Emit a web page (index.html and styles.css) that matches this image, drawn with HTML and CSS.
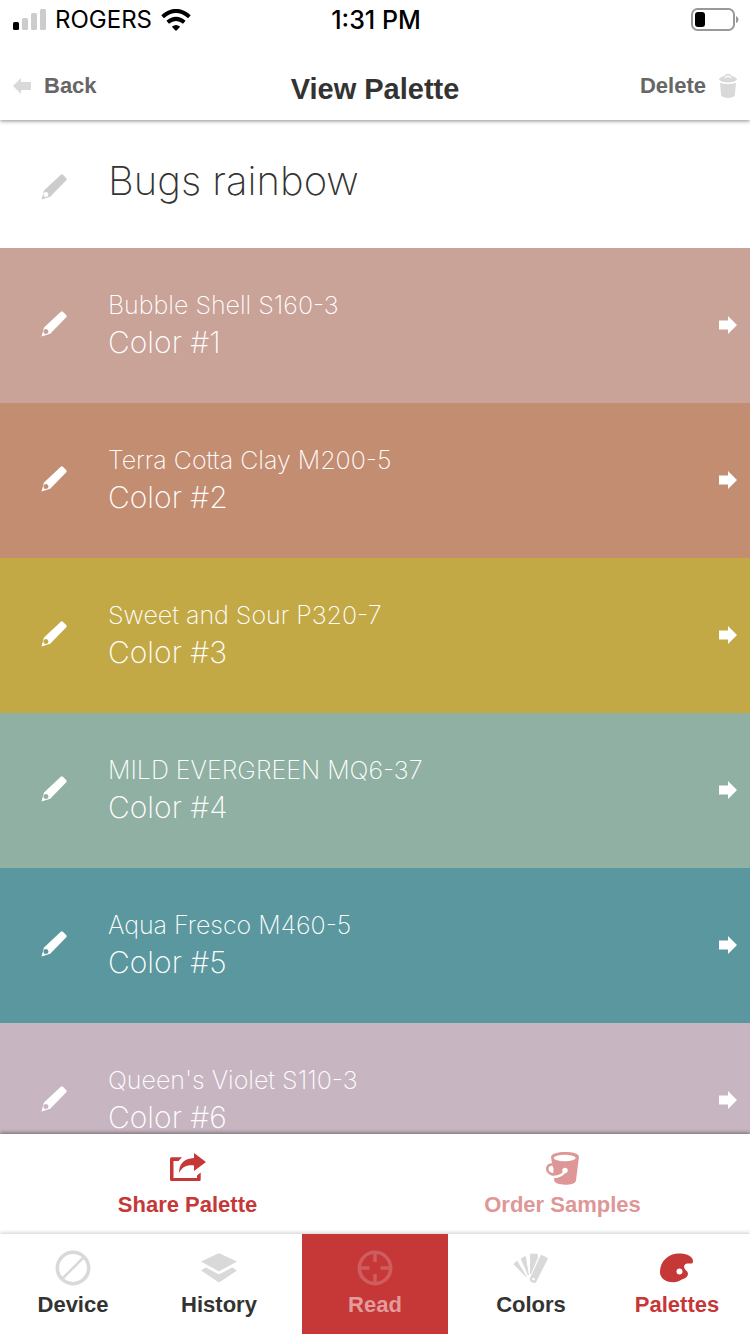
FILE: index.html
```html
<!DOCTYPE html>
<html lang="en">
<head>
<meta charset="utf-8">
<meta name="viewport" content="width=device-width, initial-scale=1">
<title>View Palette</title>
<link rel="stylesheet" href="styles.css">
</head>
<body>
<svg class="defs" aria-hidden="true">
  <symbol id="pencil" viewBox="0 0 26 26">
    <path fill="currentColor" fill-rule="evenodd" d="M19.800.7q1.200-.8 2.300.2l3 3q1 1.100.2 2.300L9.200 22.800.5 25.500 3 16.500zM5 18a2.500 2.500 0 100 5 2.500 2.500 0 000-5z"/>
  </symbol>
  <symbol id="arrow" viewBox="0 0 18 18">
    <path fill="currentColor" d="M0 4.500h9V0l9 9-9 9v-4.500H0z"/>
  </symbol>
</svg>
<div class="app">
  <div class="status">
    <div class="carrier">
      <svg width="33" height="22" viewBox="0 0 33 22"><rect y="13" width="6" height="8" rx="1.500"/><g fill="#ccc"><rect x="9" y="9" width="6" height="12" rx="1.500"/><rect x="18" y="4" width="6" height="17" rx="1.500"/><rect x="27" y="0" width="6" height="21" rx="1.500"/></g></svg>
      <span>ROGERS</span>
      <svg width="30" height="22" viewBox="0 0 30 22"><path d="M15 22l-4.200-4.300q4.200-3.400 8.400 0z"/><g fill="none" stroke="#000" stroke-width="4"><path d="M6.700 13.300q8.300-6.900 16.600 0"/><path d="M1.600 7.700q13.400-11.600 26.800 0"/></g></svg>
    </div>
    <div class="clock">1:31 PM</div>
    <svg class="battery" width="48" height="24" viewBox="0 0 48 24"><rect x="1" y="1" width="42" height="21" rx="5.500" fill="none" stroke="#999" stroke-width="2"/><rect x="4" y="4" width="10" height="15" rx="3"/><path fill="#999" d="M45 8q2.500 1 2.500 3.500T45 15z"/></svg>
  </div>
  <header class="bar">
    <button class="nav"><svg width="18" height="16" viewBox="0 0 18 16"><path fill="#d9d9d9" d="M18 4H8V0L0 8l8 8v-4h10z"/></svg>Back</button>
    <h1 class="title">View Palette</h1>
    <button class="nav nav-end">Delete<svg width="18" height="24" viewBox="0 0 18 24"><path fill="#d9d9d9" fill-rule="evenodd" d="M0 5.500C.5 3.500 3 2.200 5.300 1.900 6.500.1 7.700 0 9 0s2.500.1 3.700 1.900C15 2.200 17.500 3.500 18 5.500 16.500 7.500 13 8.500 9 8.500S1.500 7.500 0 5.500zm5.600-1.100c1 .2 1.200-.2 1.600-.8.800-1 2.800-1 3.600 0 .4.600.6 1 1.600.8C12 2.500 10.800 1.600 9 1.600S6 2.500 5.600 4.400z"/><path fill="#d9d9d9" d="M1 8.600c4 2 12 2 16 0l-1.200 12.900c-1.500 3.300-12.100 3.300-13.600 0z"/></svg></button>
  </header>
  <main class="list">
    <section class="row name-row">
      <button class="edit muted" aria-label="Rename palette"><svg width="26" height="26"><use href="#pencil"/></svg></button>
      <h2 class="palette-name">Bugs rainbow</h2>
    </section>
    <section class="row shell">
      <button class="edit" aria-label="Edit color 1"><svg width="26" height="26"><use href="#pencil"/></svg></button>
      <div class="text"><p class="paint">Bubble Shell S160-3</p><p class="label">Color #1</p></div>
      <button class="open" aria-label="Open color 1"><svg width="18" height="18"><use href="#arrow"/></svg></button>
    </section>
    <section class="row clay">
      <button class="edit" aria-label="Edit color 2"><svg width="26" height="26"><use href="#pencil"/></svg></button>
      <div class="text"><p class="paint">Terra Cotta Clay M200-5</p><p class="label">Color #2</p></div>
      <button class="open" aria-label="Open color 2"><svg width="18" height="18"><use href="#arrow"/></svg></button>
    </section>
    <section class="row sour">
      <button class="edit" aria-label="Edit color 3"><svg width="26" height="26"><use href="#pencil"/></svg></button>
      <div class="text"><p class="paint">Sweet and Sour P320-7</p><p class="label">Color #3</p></div>
      <button class="open" aria-label="Open color 3"><svg width="18" height="18"><use href="#arrow"/></svg></button>
    </section>
    <section class="row evergreen">
      <button class="edit" aria-label="Edit color 4"><svg width="26" height="26"><use href="#pencil"/></svg></button>
      <div class="text"><p class="paint">MILD EVERGREEN MQ6-37</p><p class="label">Color #4</p></div>
      <button class="open" aria-label="Open color 4"><svg width="18" height="18"><use href="#arrow"/></svg></button>
    </section>
    <section class="row aqua">
      <button class="edit" aria-label="Edit color 5"><svg width="26" height="26"><use href="#pencil"/></svg></button>
      <div class="text"><p class="paint">Aqua Fresco M460-5</p><p class="label">Color #5</p></div>
      <button class="open" aria-label="Open color 5"><svg width="18" height="18"><use href="#arrow"/></svg></button>
    </section>
    <section class="row violet">
      <button class="edit" aria-label="Edit color 6"><svg width="26" height="26"><use href="#pencil"/></svg></button>
      <div class="text"><p class="paint">Queen's Violet S110-3</p><p class="label">Color #6</p></div>
      <button class="open" aria-label="Open color 6"><svg width="18" height="18"><use href="#arrow"/></svg></button>
    </section>
  </main>
  <div class="actions">
    <button class="item red"><svg width="36" height="36" viewBox="0 0 36 36"><path fill="currentColor" d="M12 7.300H1.500Q0 7.300 0 9v20.500Q0 31 1.500 31h28q1.200 0 1.200-1.500v-7L27 25.500V28H3.500V11h5z"/><path fill="currentColor" d="M24 3l12 9-12 9v-5.500c-7-.8-11.500 1-15 7.500C9 13.500 14 8.500 24 8z"/></svg>Share Palette</button>
    <button class="item faded"><svg width="36" height="36" viewBox="0 0 36 36"><path fill="currentColor" d="M6 6.500C7 3.500 13 2 20 2s13.500 1.300 14 4.500l-3 24c-.6 3-5 4.200-11 4.200S9.500 33 9.300 30.500z"/><ellipse cx="19.700" cy="8" rx="11" ry="3.200" fill="#fff"/><ellipse cx="6" cy="19.700" rx="2.500" ry="4" fill="#fff"/><path fill="none" stroke="currentColor" stroke-width="2.500" d="M7.500 14.500C3.500 14 1.500 17 2.500 20.500S8 25 12 24"/><path fill="none" stroke="#fff" stroke-width="2.600" d="M8.500 27C14 26.800 18 25 20 21"/><circle cx="20" cy="20.500" r="2.700" fill="#fff"/></svg>Order Samples</button>
  </div>
  <nav class="tabs">
    <button class="item tab"><svg class="gray" width="36" height="36" viewBox="0 0 36 36"><g fill="none" stroke="currentColor"><circle cx="18" cy="18" r="15.700" stroke-width="3.500"/><path stroke-width="2.500" d="M7.500 28.500l21-21"/></g></svg>Device</button>
    <button class="item tab"><svg class="gray" width="36" height="36" viewBox="0 0 36 36"><path fill="currentColor" d="M17.200 3.600q.8-.4 1.600 0L36 11.500 18.800 21q-.8.400-1.600 0L0 11.500zM4.800 17.500L17.200 24q.8.400 1.600 0l12.400-6.500L36 20.500 18.800 32q-.8.500-1.600 0L0 20.500z"/></svg>History</button>
    <button class="item tab read"><svg width="36" height="36" viewBox="0 0 36 36"><g fill="none" stroke="#d05d5d"><circle cx="18" cy="18" r="15.700" stroke-width="3.500"/><path stroke-width="3.500" d="M18 2v10M18 24v10M2 18h10.500M23.500 18H34"/></g></svg>Read</button>
    <button class="item tab"><svg class="gray" width="36" height="36" viewBox="0 0 36 36"><g fill="currentColor" stroke="currentColor" stroke-linejoin="round"><path d="M.8 14L4 11.200 13 26.500z"/><path d="M8.200 8.800L12.300 6.500 15.400 25z"/><path d="M17.500 4.200h6.800V8L17.500 24z"/><path fill-rule="evenodd" stroke-width="2" d="M28.500 6l5.200 2.700L22 32l-4.500-2.500zM20.300 26.800a2.500 2.500 0 100 5 2.500 2.500 0 000-5z"/></g></svg>Colors</button>
    <button class="item tab red"><svg width="36" height="36" viewBox="0 0 36 36"><path fill="currentColor" fill-rule="evenodd" d="M1 22C1 11 9.500 3.500 20 3.500c6 0 11.500 1.500 13.500 5.500.8 2.500.5 4-.5 4.500-2.500.5-5-1-7 1-2.500 3.500.5 5 2.500 7.500 1.500 3.500-1 6-4.500 7-3 1-4.500 3-9 3.300C6 32.500 1 28 1 22zM20.500 18.500a3 3 0 100 6 3 3 0 000-6z"/></svg>Palettes</button>
  </nav>
</div>
</body>
</html>
```

FILE: styles.css
```css
* { box-sizing: border-box; }
body { margin: 0; background: #fff; color: #333332; font-family: "Liberation Sans", Arial, sans-serif; }
h1, h2, p { margin: 0; }
button { margin: 0; padding: 0; border: 0; background: none; color: inherit; font: inherit; cursor: pointer; }
svg { display: block; flex: none; }
.defs { display: none; }

.app { display: flex; flex-direction: column; height: 100vh; overflow: hidden; }

.status { position: relative; z-index: 2; display: grid; grid-template-columns: 1fr auto 1fr; align-items: center; height: 40px; padding: 0 11px 0 13px; background: #fff; font: 500 24px/40px Inter, sans-serif; color: #000; }
.carrier { display: flex; align-items: center; gap: 9px; font-weight: 400; }
.clock { font-size: 25px; }
.battery { justify-self: end; }

.bar { position: relative; z-index: 1; display: grid; grid-template-columns: 1fr auto 1fr; align-items: center; height: 80px; padding: 12px 13px 0; background: #fff; box-shadow: 0 1px 4px rgba(0, 0, 0, .45); }
.nav { display: flex; align-items: center; gap: 13px; height: 68px; color: #666; font-size: 22px; font-weight: 700; }
.nav-end { justify-self: end; }
.title { padding-top: 6px; font-size: 29px; font-weight: 700; line-height: 32px; }

.list { flex: 1; min-height: 0; overflow: hidden; font-family: Inter, sans-serif; font-weight: 250; }
.row { display: grid; grid-template-columns: 108px 1fr 31px; align-items: center; height: 155px; color: #fff; }
.name-row { height: 128px; color: #333332; }
.palette-name { padding-bottom: 6px; font-size: 40px; font-weight: 250; line-height: 48px; }
.edit { display: grid; place-items: center; height: 100%; padding-bottom: 4px; }
.muted { padding: 6px 0 0; color: #ccc; }
.text { padding-bottom: 4px; }
.paint { font-size: 25px; line-height: 36px; }
.label { font-size: 30px; line-height: 38px; }
.open { height: 100%; padding-bottom: 2px; }
.shell { background: #c9a298; }
.clay { background: #c38d72; }
.sour { background: #c3a945; }
.evergreen { background: #8fb0a2; }
.aqua { background: #5b979e; }
.violet { background: #c7b6c1; }

.actions, .tabs { position: relative; display: flex; flex: none; height: 100px; background: #fff; }
.actions { box-shadow: 0 -1px 4px rgba(0, 0, 0, .45); }
.tabs { box-shadow: 0 -1px 4px rgba(0, 0, 0, .2); }
.item { display: flex; flex: 1; flex-direction: column; align-items: center; gap: 6px; padding-top: 16px; font-size: 22px; font-weight: 700; line-height: 26px; }
.gray { color: #d9d9d9; }
.red { color: #c63737; }
.faded { color: #de9797; }
.read { margin: 0 10px; background: #c63737; color: #e39b9b; }
```
